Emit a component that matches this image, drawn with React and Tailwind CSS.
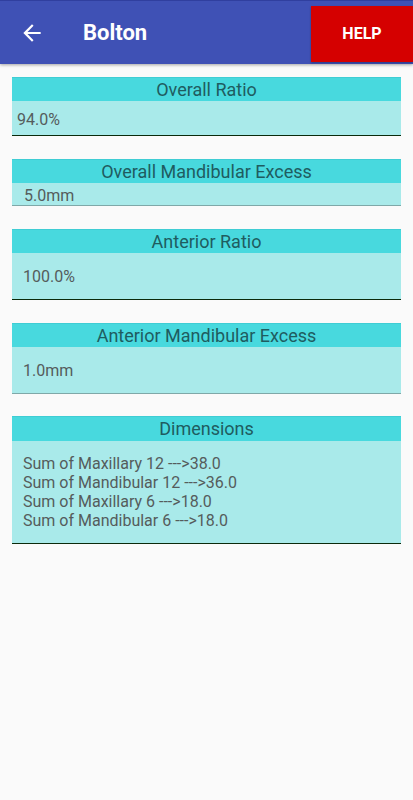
import React from 'react';

const cards = [
  { title: 'Overall Ratio', lines: ['94.0%'], top: 'mt-[13px]', head: 'h-[24px]', body: 'h-[34px] pl-[5px] pt-[9px]', border: 'border-[#0b2a0b]' },
  { title: 'Overall Mandibular Excess', lines: ['5.0mm'], top: 'mt-[23px]', head: 'h-[24px]', body: 'h-[22px] pl-[12px] pt-[3px]', border: 'border-[#7fa8a8]' },
  { title: 'Anterior Ratio', lines: ['100.0%'], top: 'mt-[23px]', head: 'h-[24px]', body: 'h-[46px] pl-[11px] pt-[14px]', border: 'border-[#0b2a0b]' },
  { title: 'Anterior Mandibular Excess', lines: ['1.0mm'], top: 'mt-[23px]', head: 'h-[24px]', body: 'h-[46px] pl-[11px] pt-[14px]', border: 'border-[#7fa8a8]' },
  {
    title: 'Dimensions',
    lines: [
      'Sum of Maxillary 12 --->38.0',
      'Sum of Mandibular 12 --->36.0',
      'Sum of Maxillary 6 --->18.0',
      'Sum of Mandibular 6 --->18.0',
    ],
    top: 'mt-[22px]',
    head: 'h-[25px]',
    body: 'h-[102px] pl-[11px] pt-[13px]',
    border: 'border-[#0b2a0b]',
  },
];

export default function App() {
  return (
    <div className="w-[413px] h-[800px] bg-[#fafafa] font-['Roboto',sans-serif] overflow-hidden">
      <header className="h-[64px] bg-[#3f51b5] border-t border-[#303f9f] shadow-[0_1px_3px_rgba(0,0,0,0.35)] flex items-center relative">
        <svg className="ml-[19px] w-[26px] h-[26px]" viewBox="0 0 24 24" fill="white">
          <path d="M20 11H7.83l5.59-5.59L12 4l-8 8 8 8 1.41-1.41L7.83 13H20v-2z" />
        </svg>
        <span className="ml-[38px] text-white text-[22px] font-bold">Bolton</span>
        <div className="ml-auto self-start mt-[5px] w-[102px] h-[56px] bg-[#d50000] flex items-center justify-center shadow-[0_1px_2px_rgba(0,0,0,0.3)]">
          <span className="text-white text-[16px] font-bold">HELP</span>
        </div>
      </header>
      <main className="px-[12px] flex flex-col w-full">
        {cards.map((c) => (
          <section key={c.title} className={`border-b ${c.border} ${c.top}`}>
            <div className={`${c.head} bg-[#48d9de] border-t border-[#3fcdd4] flex items-center justify-center text-[18px] text-[#1f5c60] leading-none`}>
              {c.title}
            </div>
            <div className={`bg-[#a9eaea] text-[16px] leading-[19px] text-[#555c5c] ${c.body}`}>
              {c.lines.map((l) => (
                <div key={l}>{l}</div>
              ))}
            </div>
          </section>
        ))}
      </main>
    </div>
  );
}
